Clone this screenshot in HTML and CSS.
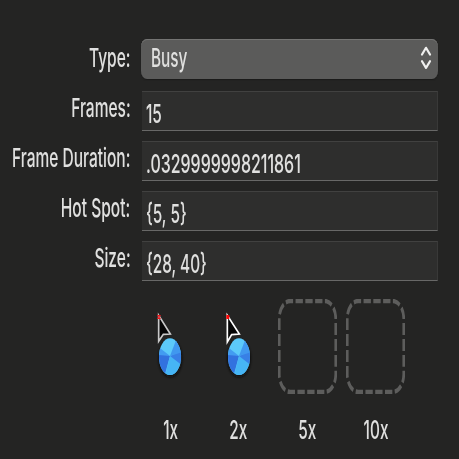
FILE: index.html
```html
<!DOCTYPE html>
<html lang="en">
<head>
<meta charset="utf-8">
<title>Cursor Inspector</title>
<link rel="stylesheet" href="styles.css">
</head>
<body>
<main class="panel">
  <div class="row">
    <div class="label"><span class="text">Type:</span></div>
    <div class="popup"><span class="text">Busy</span>
      <svg class="chevrons" width="12" height="26" viewBox="0 0 12 26"><path d="M2 9.5 6 2.8 10 9.5M2 16.2 6 22.9 10 16.2"/></svg>
    </div>
  </div>
  <div class="row">
    <div class="label"><span class="text">Frames:</span></div>
    <div class="field"><span class="text">15</span></div>
  </div>
  <div class="row">
    <div class="label"><span class="text">Frame Duration:</span></div>
    <div class="field"><span class="text digits">.0329999998211861</span></div>
  </div>
  <div class="row">
    <div class="label"><span class="text">Hot Spot:</span></div>
    <div class="field"><span class="text">{5, 5}</span></div>
  </div>
  <div class="row">
    <div class="label"><span class="text">Size:</span></div>
    <div class="field"><span class="text">{28, 40}</span></div>
  </div>
  <div class="scales">
    <figure class="scale">
      <svg class="cursor" viewBox="-14 0 180 285">
        <defs>
          <clipPath id="ball"><ellipse cx="76" cy="170" rx="33" ry="55"/></clipPath>
          <filter id="soft" x="-30%" y="-30%" width="160%" height="160%"><feGaussianBlur stdDeviation="4"/></filter>
        </defs>
        <ellipse class="shadow" cx="77" cy="176" rx="34" ry="55"/>
        <g id="beach" clip-path="url(#ball)">
          <rect x="40" y="110" width="72" height="120" fill="#5ccafa"/>
          <path fill="#429cf1" d="M76 168 36 136V172Z"/>
          <path fill="#3272df" d="M76 168 36 164V240H56Z"/>
          <path fill="#46b5f5" d="M76 168 58 240H115V192Z"/>
          <path fill="#3880e6" d="M76 168 115 198V150Z"/>
          <path fill="#4098ef" d="M76 168 115 156V110H98Z"/>
        </g>
        <path class="arrow dim" d="M42 46V124L56 103 77 102Z"/>
        <path fill="#f01418" d="M38 45h10v4h-3v4h3v4H38v-4h3v-4h-3z"/>
      </svg>
      <figcaption><span class="text">1x</span></figcaption>
    </figure>
    <figure class="scale">
      <svg class="cursor" viewBox="-12 0 180 285">
        <ellipse class="shadow" cx="78" cy="176" rx="34" ry="55"/>
        <use href="#beach" x="2"/>
        <path class="arrow" d="M43 46V126L56 104 79 102Z"/>
        <path fill="#ff0808" d="M40 45h9v12h-9z"/>
      </svg>
      <figcaption><span class="text">2x</span></figcaption>
    </figure>
    <figure class="scale">
      <svg class="well" viewBox="0 0 96 95" preserveAspectRatio="none"><rect x="2" y="2" width="92" height="91" rx="18" pathLength="336"/></svg>
      <figcaption><span class="text">5x</span></figcaption>
    </figure>
    <figure class="scale">
      <svg class="well" viewBox="0 0 96 95" preserveAspectRatio="none"><rect x="2" y="2" width="92" height="91" rx="18" pathLength="336"/></svg>
      <figcaption><span class="text">10x</span></figcaption>
    </figure>
  </div>
</main>
</body>
</html>
```
FILE: styles.css
```css
* { box-sizing: border-box; }
body {
  margin: 0;
  background: #242423;
  color: #e0e0df;
  font: 500 26px/40px Inter, "Liberation Sans", sans-serif;
}
.panel {
  width: 459px;
  height: 459px;
  padding: 38px 21px 0 0;
  overflow: hidden;
}
.row {
  display: grid;
  grid-template-columns: 130.5px 296px;
  column-gap: 11.5px;
  height: 50px;
}
.label {
  display: flex;
  justify-content: flex-end;
}
.text {
  display: inline-block;
  white-space: nowrap;
  transform: scaleX(0.59);
  transform-origin: left;
}
.text.digits { transform: scaleX(0.614); }
.label .text {
  transform: scaleX(0.597);
  transform-origin: right;
}
.popup {
  display: flex;
  justify-content: space-between;
  align-items: center;
  height: 40px;
  margin: 1px 0 0 -1px;
  padding: 0 6px 2px 10px;
  border-radius: 6px / 8px;
  background: #5b5b5a;
  box-shadow: inset 0 1px #747473, 0 1px 1px #1b1b1a;
}
.chevrons {
  fill: none;
  stroke: #f0f0ef;
  stroke-width: 2.2;
  stroke-linecap: round;
  stroke-linejoin: round;
}
.field {
  height: 40px;
  margin-top: 3px;
  padding: 2px 0 0 4px;
  background: #2e2e2d;
  border: 1px solid #393938;
  border-top-color: #414140;
  border-bottom-color: #686867;
  border-left: 0;
}
.scales {
  display: grid;
  grid-template-columns: repeat(4, 68.5px);
  margin: 10px 0 0 136px;
}
.scale {
  display: flex;
  flex-direction: column;
  align-items: center;
  margin: 0;
}
.cursor {
  width: 60px;
  height: 95px;
  margin: 2px 0 15px;
}
.well {
  width: 59px;
  height: 95px;
  margin: 1px 0 16px;
  fill: none;
  stroke: #5d5d5c;
  stroke-width: 4.4;
  stroke-dasharray: 12 4;
  stroke-dashoffset: -8.6;
}
.shadow { fill: #111; filter: url(#soft); }
.arrow {
  fill: #060606;
  stroke: #fff;
  stroke-width: 5;
}
.arrow.dim { stroke: #c9c9c9; }
figcaption .text { transform-origin: center; }
```
